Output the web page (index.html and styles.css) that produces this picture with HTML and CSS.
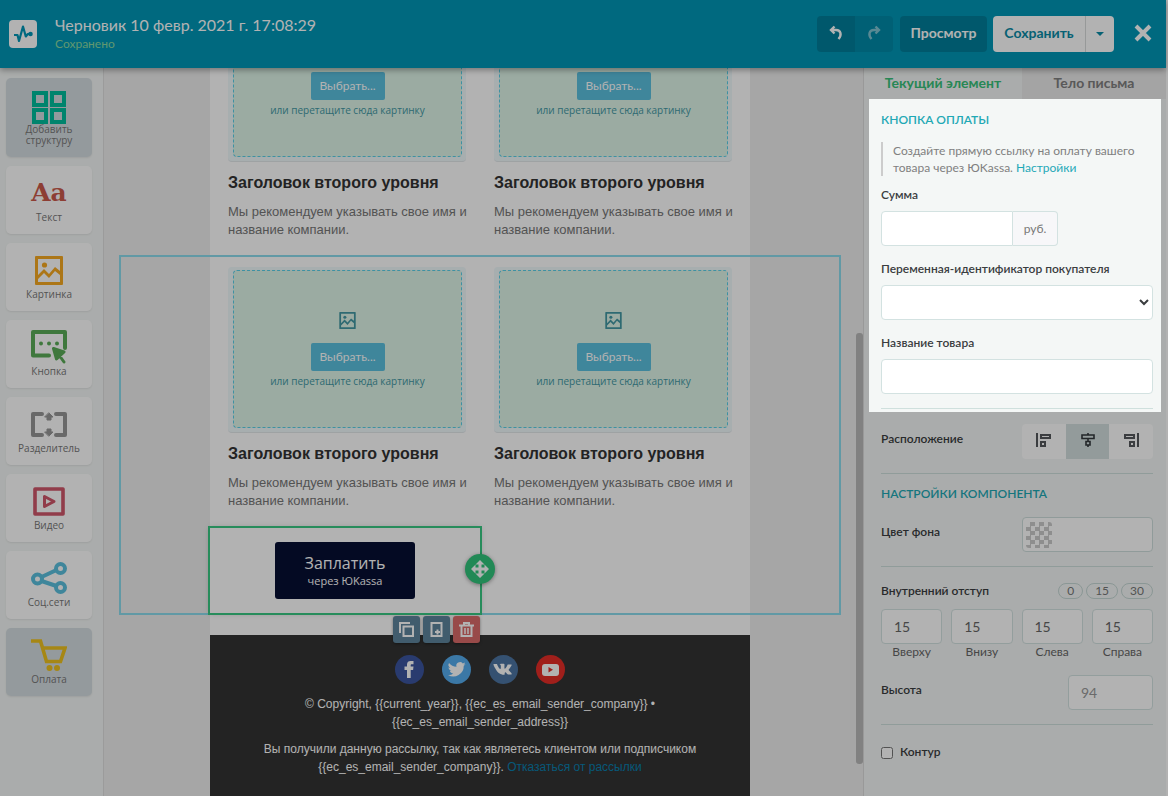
FILE: index.html
```html
<!DOCTYPE html>
<html lang="ru">
<head>
    <meta charset="UTF-8">
    <meta name="viewport" content="width=device-width, initial-scale=1.0">
    <title>Черновик 10 февр. 2021 г. 17:08:29</title>
    <link rel="stylesheet" href="styles.css">
</head>
<body>
    <!-- shared icons -->
    <svg class="sprite" aria-hidden="true">
        <symbol id="icon-picture" viewBox="0 0 28 29">
            <path fill="currentColor" fill-rule="evenodd" d="M1 0h26a1 1 0 0 1 1 1v27a1 1 0 0 1-1 1H1a1 1 0 0 1-1-1V1a1 1 0 0 1 1-1zm2 3v16l6-6 5 5 6-7 5 4V3zm0 20v3h22v-7l-5-4-6 7-5-5z"/>
            <circle cx="9.500" cy="9" r="2.600" fill="currentColor"/>
        </symbol>
    </svg>

    <header class="topbar">
        <a class="logo" href="#" aria-label="SendPulse">
            <svg width="20" height="20" viewBox="0 0 20 20" fill="none" stroke="#0097b7" stroke-width="2.200" stroke-linejoin="round">
                <path d="M1 11h3.500l1.500 6 4-14.500 2.800 10 2-2.500H17"/>
                <circle cx="17.500" cy="10" r="1.200" fill="#0097b7"/>
            </svg>
        </a>
        <div class="draft">
            <h1>Черновик 10 февр. 2021 г. 17:08:29</h1>
            <p>Сохранено</p>
        </div>
        <div class="actions">
            <div class="history">
                <button type="button" aria-label="Отменить">
                    <svg width="14" height="16" viewBox="0 0 14 16" fill="none" stroke="#fff" stroke-width="2.400"><path d="M5.500 1.500 2 5l3.500 3.500M2 5h5c5 0 6 5 2.500 9"/></svg>
                </button>
                <button type="button" class="redo" aria-label="Повторить">
                    <svg width="14" height="16" viewBox="0 0 14 16" fill="none" stroke="#fff" stroke-width="2.400"><path d="M8.500 1.500 12 5 8.500 8.500M12 5H7C2 5 1 10 4.500 14"/></svg>
                </button>
            </div>
            <button type="button" class="preview">Просмотр</button>
            <div class="save">
                <button type="button">Сохранить</button>
                <button type="button" class="caret" aria-label="Ещё"><span></span></button>
            </div>
            <button type="button" class="close" aria-label="Закрыть">
                <svg width="18" height="18" viewBox="0 0 18 18" stroke="#fff" stroke-width="4"><path d="M2 2l14 14M16 2 2 16"/></svg>
            </button>
        </div>
    </header>

    <div class="workspace">
        <nav class="blocks">
            <button type="button" class="block block-tall active">
                <i><svg width="34" height="33" viewBox="0 0 34 33" fill="none" stroke="#00bd9c" stroke-width="4"><path d="M2 2h12v12H2zM20 2h12v12H20zM2 19h12v12H2zM20 19h12v12H20z"/></svg></i>
                <span>Добавить структуру</span>
            </button>
            <button type="button" class="block">
                <b class="glyph">Aa</b>
                <span>Текст</span>
            </button>
            <button type="button" class="block">
                <i><svg class="orange" width="28" height="29"><use href="#icon-picture"/></svg></i>
                <span>Картинка</span>
            </button>
            <button type="button" class="block">
                <i><svg width="36" height="34" viewBox="0 0 36 34" fill="none" stroke="#5bac58" stroke-width="4" stroke-linejoin="round" stroke-linecap="round">
                    <path d="M34 18V2H2v23.500h16"/>
                    <g fill="#5bac58" stroke="none"><circle cx="10" cy="13.500" r="2"/><circle cx="18" cy="13.500" r="2"/><circle cx="26" cy="13.500" r="2"/></g>
                    <path d="M22.500 18.500 33 22l-7.500 7zM28 25l5 7" fill="#5bac58" stroke-width="3"/>
                </svg></i>
                <span>Кнопка</span>
            </button>
            <button type="button" class="block">
                <i><svg width="36" height="25" viewBox="0 0 36 25" fill="none" stroke="#979797" stroke-width="4" stroke-linecap="round" stroke-linejoin="round">
                    <path d="M11 2H2v21h9M25 2h9v21h-9"/>
                    <path d="M18 1l4 4h-2v3h-4V5h-2zM18 24l4-4h-2v-3h-4v3h-2z" fill="#979797" stroke-width="1"/>
                </svg></i>
                <span>Разделитель</span>
            </button>
            <button type="button" class="block">
                <i><svg width="32" height="29" viewBox="0 0 32 29" fill="none" stroke="#d0576a" stroke-width="3.600" stroke-linejoin="round"><path d="M2 2h28v25H2z"/><path d="M11.500 9.500v10L21 14.500z" stroke-width="3"/></svg></i>
                <span>Видео</span>
            </button>
            <button type="button" class="block">
                <i><svg width="36" height="32" viewBox="0 0 36 32" fill="none" stroke="#5bc0de" stroke-width="4"><circle cx="6.500" cy="17" r="4.500"/><circle cx="29.500" cy="6.500" r="4.500"/><circle cx="29.500" cy="25.500" r="4.500"/><path d="M10.500 15l15-7M10.500 19l15 5"/></svg></i>
                <span>Соц.сети</span>
            </button>
            <button type="button" class="block active">
                <i><svg width="36" height="32" viewBox="0 0 36 32" fill="none" stroke="#eec21f" stroke-width="3.600"><path d="M0 2h9.500l6 20.500h14L34 9H12"/><circle cx="18.500" cy="29" r="3" fill="#eec21f" stroke="none"/><circle cx="26" cy="29" r="3" fill="#eec21f" stroke="none"/></svg></i>
                <span>Оплата</span>
            </button>
        </nav>

        <main class="canvas">
            <div class="scroller">
                <div class="email">
                    <section class="row">
                        <article class="card">
                            <div class="drop"><div class="drop-inner">
                                <svg width="17" height="17"><use href="#icon-picture"/></svg>
                                <button type="button">Выбрать...</button>
                                <p>или перетащите сюда картинку</p>
                            </div></div>
                            <h2>Заголовок второго уровня</h2>
                            <p class="text">Мы рекомендуем указывать свое имя и<br>название компании.</p>
                        </article>
                        <article class="card">
                            <div class="drop"><div class="drop-inner">
                                <svg width="17" height="17"><use href="#icon-picture"/></svg>
                                <button type="button">Выбрать...</button>
                                <p>или перетащите сюда картинку</p>
                            </div></div>
                            <h2>Заголовок второго уровня</h2>
                            <p class="text">Мы рекомендуем указывать свое имя и<br>название компании.</p>
                        </article>
                    </section>
                    <div class="structure">
                        <section class="row">
                            <article class="card">
                                <div class="drop"><div class="drop-inner">
                                    <svg width="17" height="17"><use href="#icon-picture"/></svg>
                                    <button type="button">Выбрать...</button>
                                    <p>или перетащите сюда картинку</p>
                                </div></div>
                                <h2>Заголовок второго уровня</h2>
                                <p class="text">Мы рекомендуем указывать свое имя и<br>название компании.</p>
                            </article>
                            <article class="card">
                                <div class="drop"><div class="drop-inner">
                                    <svg width="17" height="17"><use href="#icon-picture"/></svg>
                                    <button type="button">Выбрать...</button>
                                    <p>или перетащите сюда картинку</p>
                                </div></div>
                                <h2>Заголовок второго уровня</h2>
                                <p class="text">Мы рекомендуем указывать свое имя и<br>название компании.</p>
                            </article>
                        </section>
                        <section class="payment">
                            <a class="pay" href="#"><b>Заплатить</b><span>через ЮKassa</span></a>
                            <button type="button" class="move" aria-label="Переместить">
                                <svg width="18" height="18" viewBox="0 0 18 18" fill="#fff"><path d="M9 0l4.500 4.500h-3v3h3v-3L18 9l-4.500 4.500v-3h-3v3h3L9 18l-4.500-4.500h3v-3h-3v3L0 9l4.500-4.500v3h3v-3h-3z"/></svg>
                            </button>
                            <div class="tools">
                                <button type="button" aria-label="Копировать">
                                    <svg width="15" height="15" viewBox="0 0 15 15" fill="none" stroke="#fff" stroke-width="2"><path d="M4.500 4.500H14V14H4.500zM1 11V1h10"/></svg>
                                </button>
                                <button type="button" aria-label="Сохранить блок">
                                    <svg width="15" height="15" viewBox="0 0 15 15" fill="none" stroke="#fff" stroke-width="2"><path d="M2.500 1h10v13h-10z"/><path d="M8.500 7.500v5M6 10h5"/></svg>
                                </button>
                                <button type="button" class="delete" aria-label="Удалить">
                                    <svg width="15" height="15" viewBox="0 0 15 15" fill="none" stroke="#fff" stroke-width="2"><path d="M0 3.500h15M5 3V1h5v2M2.500 4v10h10V4"/><path d="M6 6v6M9 6v6" stroke-width="1.500"/></svg>
                                </button>
                            </div>
                        </section>
                    </div>
                    <footer class="email-footer">
                        <div class="social">
                            <a class="fb" href="#" aria-label="Facebook"><svg width="29" height="29" viewBox="0 0 29 29"><path fill="#fff" d="M12 23v-8H9.500v-3.500H12V9.500C12 7 13.500 6 15.500 6H18.500v3.300h-1.700c-.9 0-1.100.4-1.100 1.100v1.100h2.800l-.4 3.500h-2.400v8z"/></svg></a>
                            <a class="tw" href="#" aria-label="Twitter"><svg width="29" height="29" viewBox="0 0 24 24"><path fill="#fff" d="M19.500 7.500c-.6.300-1.100.4-1.700.5.600-.4 1.100-1 1.300-1.700-.6.400-1.200.6-1.900.7a3 3 0 0 0-5.200 2.800C9.500 9.600 7.300 8.400 5.800 6.600a3 3 0 0 0 1 4c-.5 0-1-.1-1.400-.4 0 1.500 1 2.700 2.400 3-.4.100-.9.100-1.300 0 .4 1.200 1.500 2 2.800 2.100A6 6 0 0 1 5 16.500a8.600 8.600 0 0 0 13-7.600c.6-.4 1.100-.9 1.500-1.400z"/></svg></a>
                            <a class="vk" href="#" aria-label="ВКонтакте"><svg width="29" height="29" viewBox="-2 -3 28 28"><path fill="#fff" d="M11.600 16h1s.3 0 .4-.2c.2-.2.1-.5.100-.5s0-1.400.6-1.600c.600-.2 1.400 1.300 2.200 1.900.6.400 1.100.3 1.100.3h2.200s1.200-.1.600-1.100c-.1-.1-.4-.7-1.800-2.100-1.500-1.400-1.300-1.200.5-3.600 1.100-1.500 1.500-2.400 1.400-2.700-.1-.4-.9-.3-.9-.3h-2.500c-.3 0-.5.100-.6.400 0 0-.4 1-.9 1.900-1.100 1.900-1.600 2-1.800 1.900-.4-.3-.3-1.200-.3-1.800 0-2 .3-2.800-.6-3-.3-.1-.5-.1-1.300-.1-1 0-1.800 0-2.300.2-.3.200-.6.500-.4.500.2 0 .6.100.8.400.3.400.3 1.300.3 1.300s.2 2.400-.4 2.700c-.4.200-1-.2-2.200-2.300C6.300 7.200 5.900 6.200 5.900 6.200s-.1-.4-.7-.4H2.900s-.9 0-.5.9c0 0 2 4.600 4.200 6.900 2.100 2.200 5 2.400 5 2.400z"/></svg></a>
                            <a class="yt" href="#" aria-label="YouTube"><svg width="29" height="29" viewBox="0 0 29 29"><rect x="6" y="9" width="17" height="12" rx="3" fill="#fff"/><path d="M12.500 12v5.500l4.500-2.700z" fill="#e52d27"/></svg></a>
                        </div>
                        <p>© Copyright, {{current_year}}, {{ec_es_email_sender_company}} • {{ec_es_email_sender_address}}</p>
                        <p>Вы получили данную рассылку, так как являетесь клиентом или подписчиком {{ec_es_email_sender_company}}. <a href="#">Отказаться от рассылки</a></p>
                    </footer>
                </div>
            </div>
            <div class="scrollbar"><div class="thumb"></div></div>
        </main>

        <aside class="settings">
            <div class="tabs">
                <button type="button" class="current">Текущий элемент</button>
                <button type="button">Тело письма</button>
            </div>

            <!-- the only part left bright by the tour dimmer -->
            <section class="spotlight">
                <h3>КНОПКА ОПЛАТЫ</h3>
                <p class="hint">Создайте прямую ссылку на оплату вашего товара через ЮKassa. <a href="#">Настройки</a></p>
                <div class="field">
                    <label for="sum">Сумма</label>
                    <div class="input-group">
                        <input type="text" id="sum">
                        <span>руб.</span>
                    </div>
                </div>
                <div class="field">
                    <label for="variable">Переменная-идентификатор покупателя</label>
                    <select id="variable"><option value=""></option></select>
                </div>
                <div class="field">
                    <label for="product">Название товара</label>
                    <input type="text" id="product">
                </div>
                <hr>
            </section>

            <section class="options">
                <div class="line">
                    <span>Расположение</span>
                    <div class="align" role="group" aria-label="Расположение">
                        <button type="button" aria-label="Слева"><svg width="16" height="14" viewBox="0 0 16 14" fill="none" stroke="#55585c" stroke-width="2"><path d="M1 0v14M5 2h9v3H5zM5 9h4v4H5z"/></svg></button>
                        <button type="button" class="on" aria-label="По центру"><svg width="14" height="14" viewBox="0 0 14 14" fill="none" stroke="#33383b" stroke-width="1.600"><path d="M7 0v2M7 5v3M7 12v2M1 2h12v3.500H1zM5 8.500h4v3.500H5z"/></svg></button>
                        <button type="button" aria-label="Справа"><svg width="16" height="14" viewBox="0 0 16 14" fill="none" stroke="#55585c" stroke-width="2"><path d="M15 0v14M2 2h9v3H2zM7 9h4v4H7z"/></svg></button>
                    </div>
                </div>
                <hr>
                <h3>НАСТРОЙКИ КОМПОНЕНТА</h3>
                <div class="line">
                    <span>Цвет фона</span>
                    <button type="button" class="color" aria-label="Цвет фона"><i></i></button>
                </div>
                <hr>
                <div class="padding-head">
                    <span>Внутренний отступ</span>
                    <div class="presets">
                        <button type="button">0</button>
                        <button type="button">15</button>
                        <button type="button">30</button>
                    </div>
                </div>
                <div class="paddings">
                    <label><input type="text" value="15">Вверху</label>
                    <label><input type="text" value="15">Внизу</label>
                    <label><input type="text" value="15">Слева</label>
                    <label><input type="text" value="15">Справа</label>
                </div>
                <div class="line height-line">
                    <label for="height">Высота</label>
                    <input type="text" id="height" placeholder="94">
                </div>
                <hr>
                <div class="outline">
                    <input type="checkbox" id="outline">
                    <label for="outline">Контур</label>
                </div>
            </section>
        </aside>
    </div>
</body>
</html>
```

FILE: styles.css
```css
* {
    box-sizing: border-box;
}

body {
    margin: 0;
    height: 100vh;
    overflow: hidden;
    display: flex;
    flex-direction: column;
    padding-right: 2px;
    background-color: #fff;
    font-family: Lato, "Open Sans", sans-serif;
    font-size: 12px;
    color: #3a3d3f;
}

h1, h2, h3, p {
    margin: 0;
}

button, input, select {
    font: inherit;
    color: inherit;
}

button {
    border: none;
    padding: 0;
    cursor: pointer;
}

a {
    color: #1fa9b8;
    text-decoration: none;
}

svg {
    display: block;
    flex: none;
}

.sprite {
    position: absolute;
    width: 0;
    height: 0;
}

/* top bar */
.topbar {
    position: relative;
    z-index: 2;
    display: flex;
    align-items: center;
    height: 68px;
    flex: none;
    padding: 0 14px 0 9px;
    background-color: #0097b7;
    box-shadow: 0 2px 6px rgba(0,0,0,0.35);
}

.logo {
    width: 28px;
    height: 28px;
    display: flex;
    align-items: center;
    justify-content: center;
    background-color: #fff;
    border-radius: 4px;
}

.draft {
    margin-left: 18px;
    padding-bottom: 3px;
    color: #fff;
}

.draft h1 {
    font-size: 16px;
    line-height: 22px;
    font-weight: normal;
}

.draft p {
    font-size: 12px;
    line-height: 16px;
    color: #8cd9a0;
}

.actions {
    display: flex;
    align-items: center;
    margin-left: auto;
    font-size: 14px;
    font-weight: bold;
}

.actions button {
    height: 36px;
    display: flex;
    align-items: center;
    justify-content: center;
    padding-bottom: 3px;
}

.history {
    display: flex;
    border-radius: 4px;
    overflow: hidden;
}

.history button {
    width: 38px;
    background-color: #007f9b;
}

.history .redo {
    background-color: #008aa8;
}

.redo svg {
    opacity: 0.5;
}

.actions .preview {
    width: 87px;
    margin: 0 6px 0 7px;
    border-radius: 4px;
    background-color: #007f9b;
    color: #fff;
}

.save {
    display: flex;
    border-radius: 4px;
    overflow: hidden;
}

.save button {
    width: 92px;
    background-color: #fff;
    color: #0a8ba6;
}

.save .caret {
    width: 29px;
    padding: 0;
    border-left: 1px solid #d8dcdc;
}

.caret span {
    border: 4px solid transparent;
    border-top-color: #0a8ba6;
    border-bottom: none;
}

.actions .close {
    margin-left: 20px;
    background: none;
}

.workspace {
    flex: 1;
    min-height: 0;
    display: flex;
}

/* left column */
.blocks {
    width: 104px;
    flex: none;
    display: flex;
    flex-direction: column;
    gap: 9px;
    padding: 10px 11px 0 6px;
    background-color: #f4f7f6;
    border-right: 1px solid #dedede;
}

.block {
    height: 68px;
    flex: none;
    display: flex;
    flex-direction: column;
    align-items: center;
    padding-top: 10px;
    border-radius: 5px;
    background-color: #fff;
    box-shadow: 0 1px 2px rgba(0,0,0,0.08);
    font-family: "Open Sans", "Noto Sans", sans-serif;
    font-size: 10px;
    line-height: 14px;
    color: #777;
}

.block i, .glyph {
    height: 34px;
    display: flex;
    align-items: center;
}

.block-tall {
    height: 79px;
    padding-top: 12px;
    line-height: 11px;
}

.block.active {
    background-color: #d5dde1;
}

.orange {
    color: #f7a922;
}

.glyph {
    font-family: "DejaVu Serif", serif;
    font-size: 25px;
    color: #cb5a4b;
}

/* letter */
.canvas {
    flex: 1;
    min-width: 0;
    display: flex;
    background-color: #eee;
}

.scroller {
    flex: 1;
    overflow: hidden;
}

.scrollbar {
    width: 7px;
    padding-top: 265px;
}

.thumb {
    height: 431px;
    border-radius: 3px;
    background-color: #b9b9b9;
}

.email {
    width: 540px;
    margin: -83px auto 0;
    background-color: #fff;
    font-family: "Liberation Sans", Arial, sans-serif;
}

.row {
    display: flex;
    gap: 28px;
    padding: 11px 18px 17px;
}

.card {
    flex: 1;
    min-width: 0;
}

.drop {
    padding: 3px 4px 4px 5px;
    border-radius: 4px;
    background-color: #eff9fb;
    border-bottom: 1px solid #e2e8ea;
}

.drop-inner {
    height: 158px;
    display: flex;
    flex-direction: column;
    align-items: center;
    padding-top: 41px;
    border: 1px dashed #5ad0ea;
    border-radius: 4px;
    background-color: #def5e8;
    font-family: "Open Sans", "Noto Sans", sans-serif;
    font-size: 10px;
    line-height: 14px;
    color: #4398a4;
}

.drop-inner button {
    width: 74px;
    height: 28px;
    margin: 14px 0 3px;
    border-radius: 2px;
    background-color: #5bc0de;
    font-family: Lato, "Open Sans", sans-serif;
    font-size: 12px;
    color: #fff;
}

.card h2 {
    margin-top: 10px;
    font-size: 16px;
    line-height: 22px;
    color: #333;
}

.text {
    margin-top: 9px;
    font-size: 13px;
    line-height: 18px;
    white-space: nowrap;
    color: #777;
}

.structure {
    position: relative;
    margin-bottom: 22px;
}

.structure::after {
    content: "";
    position: absolute;
    inset: -1px -91px -2px;
    border: 2px solid #8cdcec;
    pointer-events: none;
}

.payment {
    position: relative;
    z-index: 1;
    width: 270px;
    margin-top: 1px;
    padding: 14px 0;
    outline: 2px solid #38c983;
    box-shadow: 0 0 6px rgba(0,0,0,0.25);
    background-color: #fff;
}

.pay {
    width: 140px;
    height: 57px;
    margin: 0 auto;
    display: flex;
    flex-direction: column;
    align-items: center;
    justify-content: center;
    border-radius: 3px;
    background-color: #070f33;
    font-family: "Open Sans", "Noto Sans", sans-serif;
    font-size: 11px;
    line-height: 15px;
    color: #fff;
}

.pay b {
    font-size: 16px;
    line-height: 20px;
    font-weight: normal;
}

.move {
    position: absolute;
    right: -15px;
    top: 26px;
    width: 30px;
    height: 30px;
    display: flex;
    align-items: center;
    justify-content: center;
    border-radius: 50%;
    background-color: #32c57b;
    box-shadow: 0 1px 4px rgba(0,0,0,0.4);
}

.tools {
    position: absolute;
    right: 0;
    top: 88px;
    display: flex;
    gap: 3px;
}

.tools button {
    width: 27px;
    height: 27px;
    display: flex;
    align-items: center;
    justify-content: center;
    border-radius: 3px;
    background-color: #5e859c;
    box-shadow: 0 1px 3px rgba(0,0,0,0.4);
}

.tools .delete {
    background-color: #da6a69;
}

.email-footer {
    min-height: 180px;
    padding: 20px 40px;
    background-color: #333;
    color: #fff;
    text-align: center;
    font-size: 12px;
    line-height: 18px;
}

.email-footer p {
    margin-top: 9px;
}

.email-footer p a {
    color: #0a7fae;
}

.social {
    display: flex;
    justify-content: center;
    gap: 18px;
    margin-bottom: 11px;
}

.social a {
    border-radius: 50%;
}

.fb { background-color: #3b55a0; }
.tw { background-color: #55acee; }
.vk { background-color: #4c75a3; }
.yt { background-color: #e52d27; }

/* right column */
.settings {
    width: 303px;
    flex: none;
    background-color: #f4f7f6;
    border-left: 1px solid #dcdcdc;
}

.tabs {
    display: flex;
    height: 31px;
}

.tabs button {
    flex: 1;
    padding-bottom: 2px;
    background-color: #ebebeb;
    font-size: 14px;
    font-weight: bold;
    color: #808080;
}

.tabs .current {
    flex: none;
    width: 158px;
    background: none;
    color: #38c27a;
}

/* the spread shadow dims everything outside the section */
.spotlight {
    position: relative;
    z-index: 10;
    margin: 0 5px;
    padding: 12px 8px 3px 12px;
    background-color: #f4f7f6;
    box-shadow: 0 0 0 2000px rgba(0,0,0,0.3);
}

h3 {
    font-size: 12px;
    line-height: 18px;
    font-weight: 600;
    color: #1fa9b5;
}

.hint {
    margin: 13px 0 10px;
    padding-left: 10px;
    border-left: 2px solid #ccc;
    line-height: 17px;
    color: #808080;
}

.field {
    margin-bottom: 14px;
}

.field > label {
    display: block;
    margin-bottom: 8px;
    line-height: 17px;
}

.field > label, .line, .padding-head > span, .outline {
    font-weight: 600;
}

.field input, .field select, .line input, .paddings input {
    display: block;
    width: 100%;
    height: 35px;
    padding: 0 12px;
    border: 1px solid #d3e2e1;
    border-radius: 4px;
    background-color: #fff;
}

.field select {
    padding: 0;
}

.input-group {
    display: flex;
    width: 177px;
}

.input-group input {
    flex: 1;
    min-width: 0;
    border-radius: 4px 0 0 4px;
}

.input-group span {
    width: 45px;
    border: 1px solid #d3e2e1;
    border-left: none;
    border-radius: 0 4px 4px 0;
    background-color: #f7f7f9;
    line-height: 33px;
    text-align: center;
    color: #777;
}

hr {
    margin: 0;
    border: none;
    border-top: 1px solid #cfe0dd;
}

.options {
    padding: 12px 13px 0 17px;
}

.line {
    display: flex;
    justify-content: space-between;
    margin-bottom: 14px;
}

.line > span, .line > label {
    line-height: 30px;
}

.align {
    display: flex;
    width: 131px;
    height: 35px;
    border-radius: 4px;
    overflow: hidden;
    background-color: #fff;
}

.align button {
    flex: 1;
    display: flex;
    align-items: center;
    justify-content: center;
    padding-bottom: 3px;
    background: none;
}

.align .on {
    background-color: #d3dfdf;
}

.options h3 {
    margin: 11px 0 14px;
}

.color {
    width: 131px;
    height: 35px;
    padding-left: 3px;
    border: 1px solid #cfdedd;
    border-radius: 4px;
    background-color: #fff;
}

.color i {
    display: block;
    width: 26px;
    height: 26px;
    border-radius: 3px;
    background: repeating-conic-gradient(#ccc 0% 25%, #fff 0% 50%) 0 0 / 9px 9px;
}

.padding-head {
    display: flex;
    justify-content: space-between;
    align-items: center;
    margin: 16px 0 10px;
    line-height: 16px;
}

.presets {
    display: flex;
    gap: 3px;
}

.presets button {
    height: 16px;
    padding: 0 8px;
    border: 1px solid #c6d8d6;
    border-radius: 8px;
    background: none;
    line-height: 12px;
    color: #777;
}

.paddings {
    display: flex;
    gap: 9px;
    margin-bottom: 15px;
}

.paddings label {
    flex: 1;
    text-align: center;
    line-height: 16px;
    color: #666;
}

.paddings input, .line input {
    font-size: 14px;
    font-weight: normal;
}

.height-line input {
    width: 85px;
}

.line input::placeholder {
    color: #999;
}

.outline {
    display: flex;
    gap: 7px;
    margin-top: 18px;
    line-height: 17px;
}

.outline input {
    width: 12px;
    height: 12px;
    margin: 4px 0 0;
}
```
